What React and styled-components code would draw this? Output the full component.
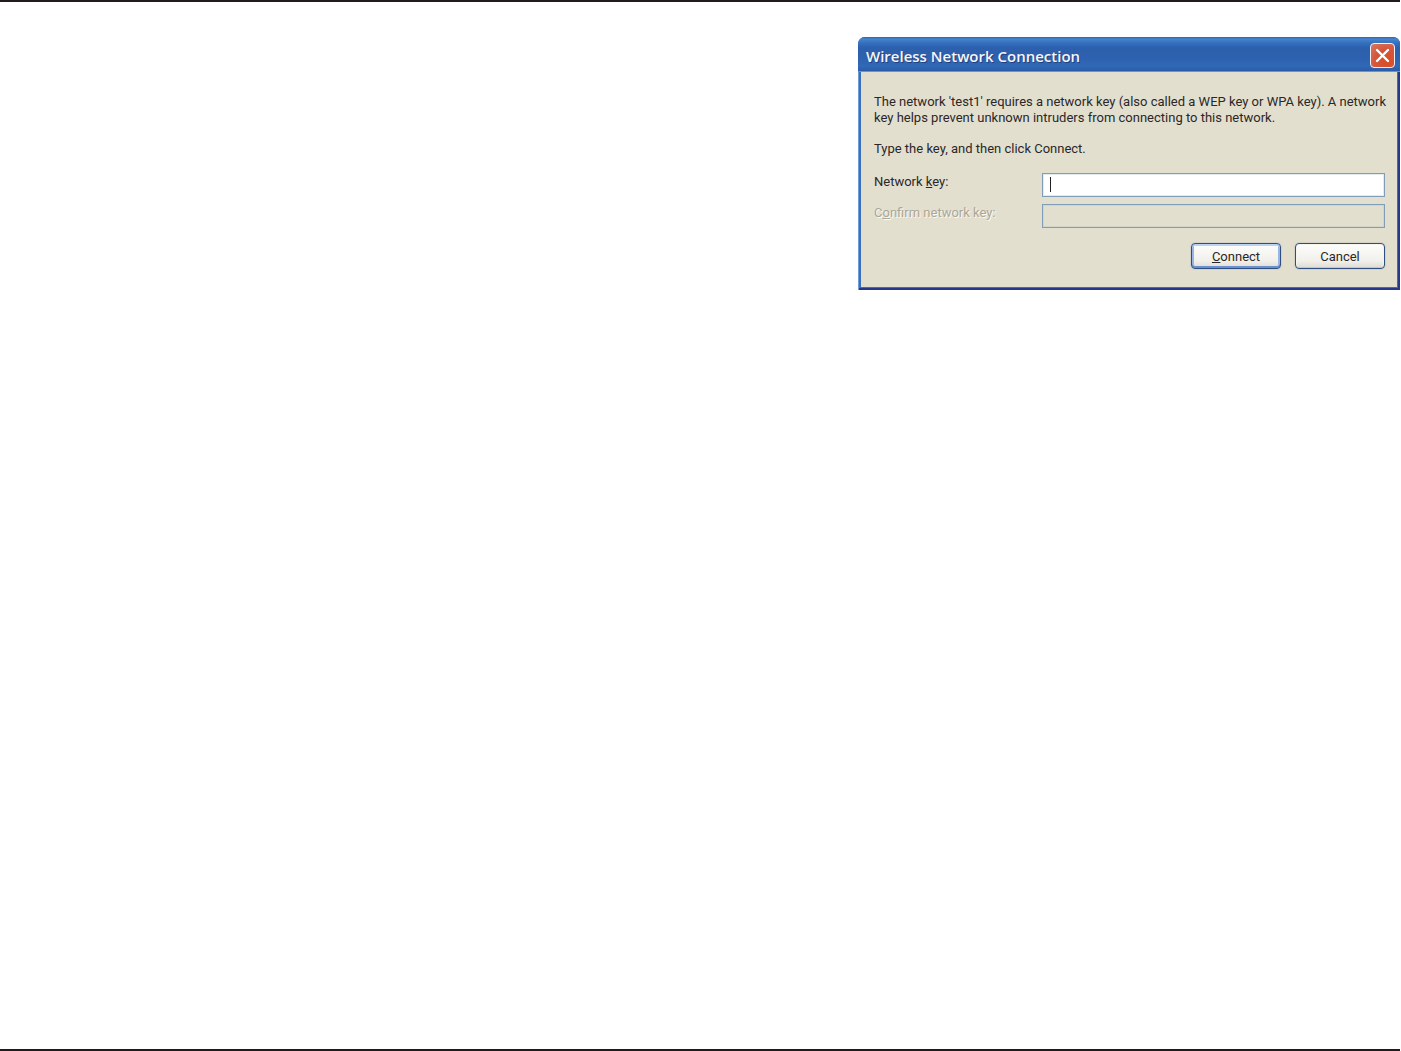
import React from "react";
import styled, { createGlobalStyle, css } from "styled-components";

const uiFont = `Tahoma, Roboto, "DejaVu Sans Condensed", sans-serif`;

const GlobalStyle = createGlobalStyle`
  *, *::before, *::after { box-sizing: border-box; }
  body { margin: 0; background: #fff; }
`;

const Page = styled.main`
  display: flex;
  flex-direction: column;
  align-items: flex-end;
  justify-content: space-between;
  min-height: 100vh;
  padding-right: 1px;
`;

const Rule = styled.hr`
  width: 100%;
  height: 2px;
  margin: 0;
  border: 0;
  background: #231a1e;
`;

const Content = styled.div`
  display: flex;
  flex: 1;
  align-items: flex-start;
  padding-top: 35px;
`;

const Dialog = styled.section`
  display: flex;
  flex-direction: column;
  width: 542px;
  max-width: 100%;
  padding: 0 3px 3px;
  border-radius: 7px 7px 0 0;
  background: #3a6fbc;
  box-shadow: inset 1px 0 #6f9bd6, inset -2px -2px #27378a;
  font: 13px/16px ${uiFont};
  color: #2b2728;
`;

const TitleBar = styled.header`
  display: flex;
  align-items: center;
  justify-content: space-between;
  height: 35px;
  margin: 0 -3px;
  padding: 2px 5px 0 8px;
  border-bottom: 1px solid #6d93c8;
  border-radius: 7px 7px 0 0;
  background: linear-gradient(#2a62b3 0, #4586cb 2px, #3470bf 6px, #2c5fac 11px, #2d62b0 22px, #3169b6 29px, #2b5ba9 34px);
`;

const Title = styled.h1`
  margin: 0;
  padding-top: 1px;
  font: 600 15px/20px "Trebuchet MS", "Open Sans", sans-serif;
  color: #f6f6fa;
  text-shadow: 1px 1px #24407c;
`;

const CloseButton = styled.button`
  display: grid;
  place-items: center;
  width: 25px;
  height: 25px;
  padding: 0;
  border: 1px solid #f4f0f3;
  border-radius: 4px;
  background: radial-gradient(circle at 70% 75%, #dc4d25, #d4553a 50%, #d77a66);
  color: #fff;
`;

const Form = styled.form`
  display: flex;
  flex-direction: column;
  padding: 22px 6px 18px 13px;
  background: #e3dfcf;
`;

const Message = styled.p`
  margin: 0 0 15px;
`;

const Fields = styled.div`
  display: grid;
  grid-template-columns: 168px 1fr;
  row-gap: 7px;
  margin-top: 1px;
  padding-right: 6px;
`;

const Label = styled.label`
  padding-top: 1px;
  ${({ $disabled }) => $disabled && css`
    color: #aaa799;
    text-shadow: 1px 1px #fbfaf3;
  `}
`;

const FieldBox = styled.div`
  position: relative;
  display: flex;
  ${({ $caret }) => $caret && css`
    &::after {
      content: "";
      position: absolute;
      top: 4px;
      left: 8px;
      width: 1px;
      height: 15px;
      background: #231f20;
    }
  `}
`;

const KeyInput = styled.input`
  width: 100%;
  height: 24px;
  padding: 2px 6px;
  border: 1px solid #7f9db9;
  outline: 0;
  background: #fff;
  box-shadow: inset 0 0 0 1px #e3eaf0;
  font: inherit;
  caret-color: transparent;
  &:disabled {
    background: #e3dfcf;
    box-shadow: inset 0 0 0 1px #d3d4cb;
  }
`;

const Actions = styled.div`
  display: flex;
  justify-content: flex-end;
  gap: 14px;
  margin-top: 15px;
  padding-right: 6px;
`;

const Button = styled.button`
  width: 90px;
  height: 26px;
  padding: 2px 0 0;
  border: 1px solid #2f4f80;
  border-radius: 4px;
  background: linear-gradient(#fdfdfc, #f1f0eb 70%, #dedbd3);
  box-shadow: ${({ $primary }) => $primary
    ? "inset 0 2px #bdd2f3, inset 0 -2px #6c8fd0, inset 2px 0 #98b5e4, inset -2px 0 #98b5e4"
    : "inset 0 -1px #cbc7bb, inset 0 0 0 1px #f5f4ef"}, 0 0 0 1px #d3d2c8;
  font: inherit;
  color: inherit;
`;

export default function App() {
  return (
    <>
      <GlobalStyle />
      <Page>
        <Rule />
        <Content>
          <Dialog role="dialog" aria-labelledby="dialog-title">
            <TitleBar>
              <Title id="dialog-title">Wireless Network Connection</Title>
              <CloseButton type="button" aria-label="Close">
                <svg width="15" height="15" viewBox="0 0 15 15" fill="none" stroke="currentColor" strokeWidth="2.4" strokeLinecap="round">
                  <path d="M2 2 13 13M13 2 2 13" />
                </svg>
              </CloseButton>
            </TitleBar>
            <Form onSubmit={(event) => event.preventDefault()}>
              <Message>
                The network 'test1' requires a network key (also called a WEP key or WPA key). A network
                key helps prevent unknown intruders from connecting to this network.
              </Message>
              <Message>Type the key, and then click Connect.</Message>
              <Fields>
                <Label htmlFor="network-key">Network <u>k</u>ey:</Label>
                <FieldBox $caret>
                  <KeyInput id="network-key" type="text" />
                </FieldBox>
                <Label htmlFor="confirm-key" $disabled>C<u>o</u>nfirm network key:</Label>
                <FieldBox>
                  <KeyInput id="confirm-key" type="text" disabled />
                </FieldBox>
              </Fields>
              <Actions>
                <Button type="submit" $primary><u>C</u>onnect</Button>
                <Button type="button">Cancel</Button>
              </Actions>
            </Form>
          </Dialog>
        </Content>
        <Rule />
      </Page>
    </>
  );
}
